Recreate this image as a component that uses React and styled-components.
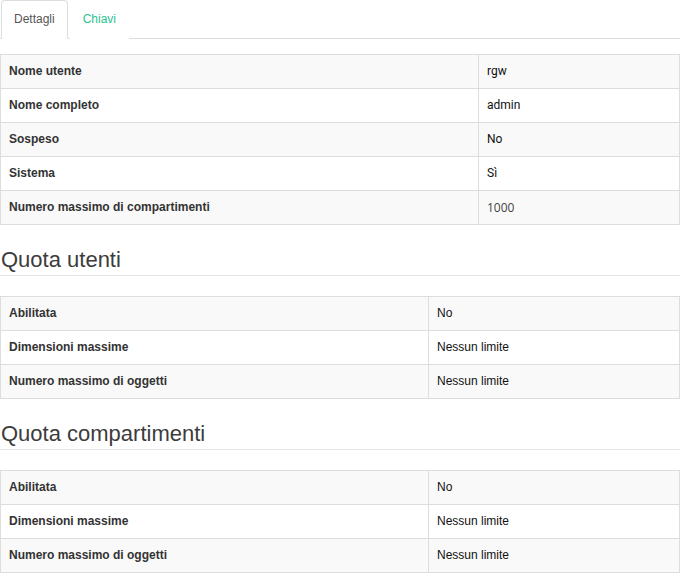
import React from 'react';
import styled, { createGlobalStyle } from 'styled-components';

const GlobalStyle = createGlobalStyle`
  body {
    margin: 0;
    background: #fff;
    font-family: 'Liberation Sans', Arial, sans-serif;
    font-size: 12px;
    line-height: 17px;
    color: #333;
  }
`;

const Page = styled.div`
  width: 680px;
`;

const Tabs = styled.ul`
  display: flex;
  list-style: none;
  margin: 0;
  padding: 0 0 0 1px;
  border-bottom: 1px solid #ddd;
`;

const Tab = styled.li`
  margin-right: 2px;
  margin-bottom: -1px;
  padding: 10px 12px;
  border: 1px solid ${(props) => (props.active ? '#ddd' : 'transparent')};
  border-bottom-color: ${(props) => (props.active ? '#fff' : 'transparent')};
  border-radius: 4px 4px 0 0;
  background: #fff;
  color: ${(props) => (props.active ? '#555' : '#2bc48f')};
  cursor: pointer;
`;

const Content = styled.div`
  padding-top: 15px;
`;

const Table = styled.table`
  width: 100%;
  border-collapse: collapse;
  margin-bottom: 20px;
  table-layout: fixed;
`;

const Row = styled.tr`
  &:nth-child(odd) {
    background: #f9f9f9;
  }
`;

const Label = styled.td`
  width: ${(props) => props.width - 17}px;
  padding: 8px;
  border: 1px solid #ddd;
  font-weight: bold;
  color: #333;
  line-height: 17px;
  vertical-align: top;
`;

const Value = styled.td`
  padding: 8px;
  border: 1px solid #ddd;
  line-height: 17px;
  color: ${(props) => (props.muted ? '#444' : '#111')};
  font-family: ${(props) =>
    props.font === 'roboto'
      ? "Roboto, 'Liberation Sans', sans-serif"
      : props.font === 'open'
      ? "'Open Sans', 'Liberation Sans', sans-serif"
      : "'Liberation Sans', Arial, sans-serif"};
`;

const Legend = styled.h3`
  margin: 0 0 20px;
  padding-left: 1px;
  font-size: 22px;
  font-weight: normal;
  line-height: 30px;
  color: #3c3c3c;
  border-bottom: 1px solid #e5e5e5;
`;

const details = [
  ['Nome utente', 'rgw', 'roboto'],
  ['Nome completo', 'admin', 'roboto'],
  ['Sospeso', 'No', 'roboto'],
  ['Sistema', 'Sì', 'roboto'],
  ['Numero massimo di compartimenti', '1000', 'open'],
];

const quota = [
  ['Abilitata', 'No'],
  ['Dimensioni massime', 'Nessun limite'],
  ['Numero massimo di oggetti', 'Nessun limite'],
];

const InfoTable = ({ rows, labelWidth }) => (
  <Table>
    <tbody>
      {rows.map(([label, value, font]) => (
        <Row key={label}>
          <Label width={labelWidth}>{label}</Label>
          <Value font={font} muted={font === 'open'}>
            {value}
          </Value>
        </Row>
      ))}
    </tbody>
  </Table>
);

export default function App() {
  return (
    <Page>
      <GlobalStyle />
      <Tabs>
        <Tab active>Dettagli</Tab>
        <Tab>Chiavi</Tab>
      </Tabs>
      <Content>
        <InfoTable rows={details} labelWidth={478} />
        <Legend>Quota utenti</Legend>
        <InfoTable rows={quota} labelWidth={428} />
        <Legend>Quota compartimenti</Legend>
        <InfoTable rows={quota} labelWidth={428} />
      </Content>
    </Page>
  );
}
